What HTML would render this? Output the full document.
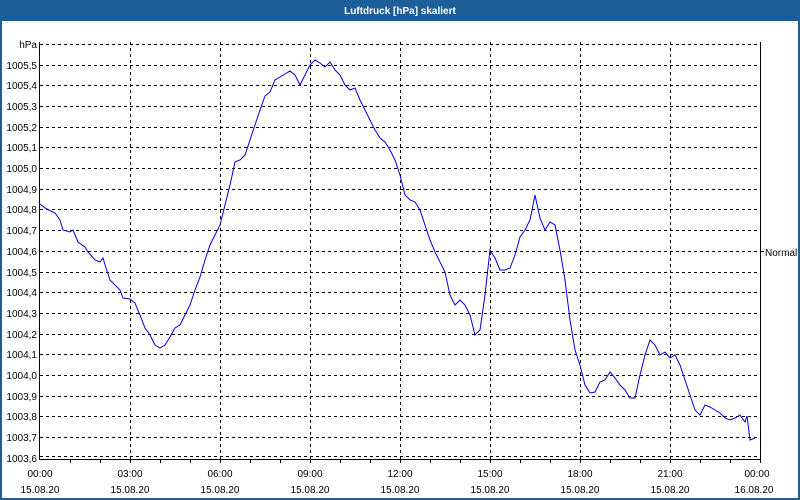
<!DOCTYPE html>
<html><head><style>
html,body{margin:0;padding:0;background:#fff}
svg{display:block}
text{font-family:"Liberation Sans","DejaVu Sans",sans-serif;font-size:10px;fill:#000}
</style></head><body>
<svg width="800" height="500" viewBox="0 0 800 500" xmlns="http://www.w3.org/2000/svg">
<rect x="0" y="0" width="800" height="500" fill="#1d5e98"/>
<rect x="2" y="21" width="796" height="477" fill="#fff"/>
<text x="400" y="14" text-anchor="middle" style="fill:#fff;font-weight:bold;font-size:10px">Luftdruck [hPa] skaliert</text>
<g stroke="#000" stroke-width="1" stroke-dasharray="3,3" shape-rendering="crispEdges">
<line x1="40" x2="760" y1="44.5" y2="44.5"/>
<line x1="40" x2="760" y1="65.5" y2="65.5"/>
<line x1="40" x2="760" y1="85.5" y2="85.5"/>
<line x1="40" x2="760" y1="106.5" y2="106.5"/>
<line x1="40" x2="760" y1="127.5" y2="127.5"/>
<line x1="40" x2="760" y1="147.5" y2="147.5"/>
<line x1="40" x2="760" y1="168.5" y2="168.5"/>
<line x1="40" x2="760" y1="189.5" y2="189.5"/>
<line x1="40" x2="760" y1="209.5" y2="209.5"/>
<line x1="40" x2="760" y1="230.5" y2="230.5"/>
<line x1="40" x2="760" y1="251.5" y2="251.5"/>
<line x1="40" x2="760" y1="272.5" y2="272.5"/>
<line x1="40" x2="760" y1="292.5" y2="292.5"/>
<line x1="40" x2="760" y1="313.5" y2="313.5"/>
<line x1="40" x2="760" y1="334.5" y2="334.5"/>
<line x1="40" x2="760" y1="354.5" y2="354.5"/>
<line x1="40" x2="760" y1="375.5" y2="375.5"/>
<line x1="40" x2="760" y1="396.5" y2="396.5"/>
<line x1="40" x2="760" y1="416.5" y2="416.5"/>
<line x1="40" x2="760" y1="437.5" y2="437.5"/>
<line x1="40" x2="760" y1="456.5" y2="456.5"/>
<line x1="130.5" x2="130.5" y1="42" y2="459"/>
<line x1="220.5" x2="220.5" y1="42" y2="459"/>
<line x1="310.5" x2="310.5" y1="42" y2="459"/>
<line x1="400.5" x2="400.5" y1="42" y2="459"/>
<line x1="490.5" x2="490.5" y1="42" y2="459"/>
<line x1="580.5" x2="580.5" y1="42" y2="459"/>
<line x1="670.5" x2="670.5" y1="42" y2="459"/>
</g>
<g stroke="#000" stroke-width="1" shape-rendering="crispEdges">
<line x1="39.5" x2="39.5" y1="42" y2="460"/>
<line x1="760.5" x2="760.5" y1="42" y2="460"/>
<line x1="39" x2="761" y1="459.5" y2="459.5"/>
<line x1="760" x2="764" y1="251.5" y2="251.5"/>
<path d="M70.5 459v4M100.5 459v4M130.5 459v4M160.5 459v4M190.5 459v4M220.5 459v4M250.5 459v4M280.5 459v4M310.5 459v4M340.5 459v4M370.5 459v4M400.5 459v4M430.5 459v4M460.5 459v4M490.5 459v4M520.5 459v4M550.5 459v4M580.5 459v4M610.5 459v4M640.5 459v4M670.5 459v4M700.5 459v4M730.5 459v4M760.5 459v4"/>
</g>
<g text-anchor="end">
<text x="37" y="48">hPa</text>
<text x="37" y="69">1005,5</text>
<text x="37" y="89">1005,4</text>
<text x="37" y="110">1005,3</text>
<text x="37" y="131">1005,2</text>
<text x="37" y="151">1005,1</text>
<text x="37" y="172">1005,0</text>
<text x="37" y="193">1004,9</text>
<text x="37" y="213">1004,8</text>
<text x="37" y="234">1004,7</text>
<text x="37" y="255">1004,6</text>
<text x="37" y="276">1004,5</text>
<text x="37" y="296">1004,4</text>
<text x="37" y="317">1004,3</text>
<text x="37" y="338">1004,2</text>
<text x="37" y="358">1004,1</text>
<text x="37" y="379">1004,0</text>
<text x="37" y="400">1003,9</text>
<text x="37" y="420">1003,8</text>
<text x="37" y="441">1003,7</text>
<text x="37" y="462">1003,6</text>
</g>
<text x="765" y="256">Normal</text>
<g text-anchor="middle">
<text x="40" y="477">00:00</text><text x="40" y="493">15.08.20</text>
<text x="130" y="477">03:00</text><text x="130" y="493">15.08.20</text>
<text x="220" y="477">06:00</text><text x="220" y="493">15.08.20</text>
<text x="310" y="477">09:00</text><text x="310" y="493">15.08.20</text>
<text x="400" y="477">12:00</text><text x="400" y="493">15.08.20</text>
<text x="490" y="477">15:00</text><text x="490" y="493">15.08.20</text>
<text x="580" y="477">18:00</text><text x="580" y="493">15.08.20</text>
<text x="670" y="477">21:00</text><text x="670" y="493">15.08.20</text>
<text x="757" y="477">00:00</text><text x="754" y="493">16.08.20</text>
</g>
<polyline fill="none" stroke="#0000e0" stroke-width="1" points="40,204 45,208 55,213 60,220 63,230 70,232 73,230 78,242 85,247 88,252 95,260 100,262 103,258 106,268 110,280 115,285 120,290 123,298 130,299 135,303 140,315 145,328 150,335 155,345 160,348 165,345 170,337 175,328 180,325 185,315 190,305 195,290 200,277 205,260 210,245 215,235 220,225 225,205 230,185 235,162 240,160 245,155 250,140 255,125 260,110 265,96 270,92 275,80 280,77 285,74 290,71 295,75 300,85 305,75 310,65 315,60 320,63 325,67 330,62 335,70 340,75 345,85 350,90 355,88 360,100 365,110 370,120 375,130 380,138 385,142 390,150 395,160 400,175 405,195 410,200 415,202 420,210 425,225 430,240 435,252 440,262 445,272 450,295 455,305 460,300 465,305 470,315 475,335 480,330 485,295 490,250 495,258 500,270 505,270 510,268 515,255 520,237 525,230 530,220 535,195 540,218 545,230 550,222 555,225 560,250 565,280 570,320 575,350 580,365 585,385 590,393 595,392 600,382 605,380 610,372 615,378 620,385 625,390 630,398 635,398 640,375 645,355 650,340 655,345 660,355 665,352 670,358 675,355 680,365 685,380 690,395 695,410 700,415 705,405 710,407 715,410 720,413 725,418 730,420 735,418 740,415 745,422 747,416 750,440 755,438"/>
</svg>
</body></html>
